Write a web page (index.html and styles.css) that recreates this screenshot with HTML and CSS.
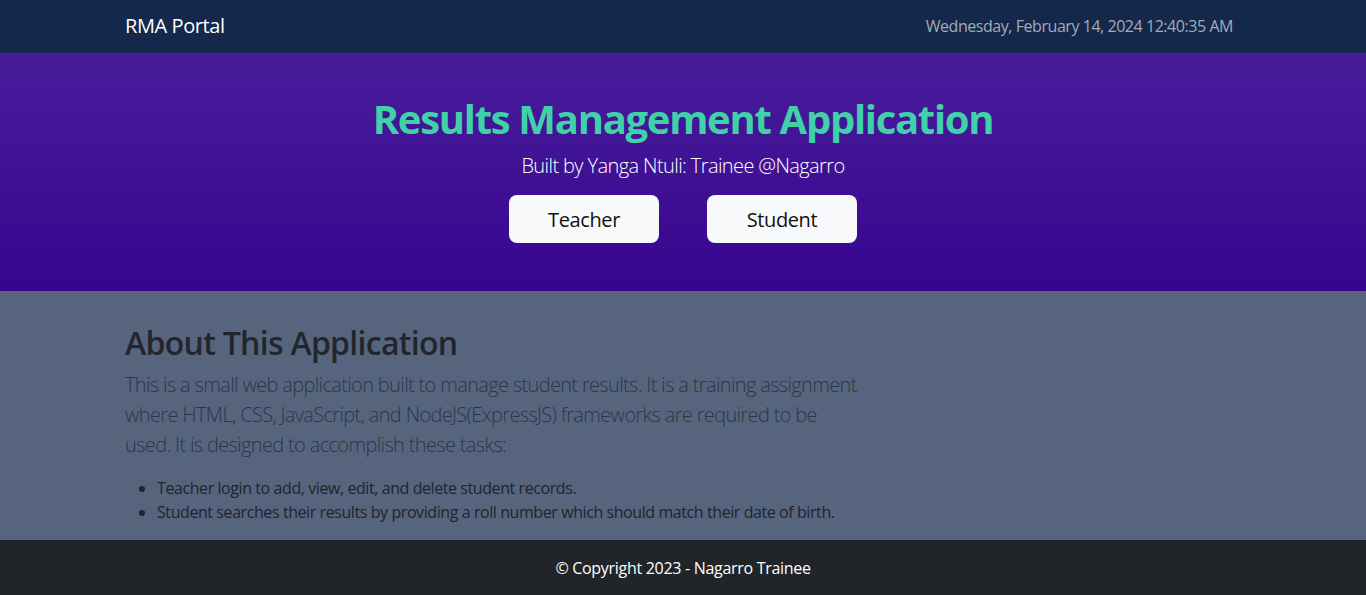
FILE: index.html
```html
<!DOCTYPE html>
<html lang="en">
<head>
<meta charset="utf-8">
<title>RMA Portal</title>
<link rel="stylesheet" href="styles.css">
</head>
<body>
<nav class="navbar">
  <div class="container nav-inner">
    <a class="brand" href="#">RMA Portal</a>
    <span class="clock">Wednesday, February 14, 2024 12:40:35 AM</span>
  </div>
</nav>
<header class="hero">
  <h1 class="hero-title">Results Management Application</h1>
  <p class="hero-sub">Built by Yanga Ntuli: Trainee @Nagarro</p>
  <div class="hero-actions">
    <a class="btn" href="#">Teacher</a>
    <a class="btn" href="#">Student</a>
  </div>
</header>
<main class="about">
  <div class="container">
    <h2 class="about-title">About This Application</h2>
    <p class="lead">This is a small web application built to manage student results. It is a training assignment where HTML, CSS, JavaScript, and NodeJS(ExpressJS) frameworks are required to be used. It is designed to accomplish these tasks:</p>
    <ul class="tasks">
      <li>Teacher login to add, view, edit, and delete student records.</li>
      <li>Student searches their results by providing a roll number which should match their date of birth.</li>
    </ul>
  </div>
</main>
<footer class="footer">© Copyright 2023 - Nagarro Trainee</footer>
</body>
</html>
```
FILE: styles.css
```css
* { box-sizing: border-box; }
html, body { margin: 0; padding: 0; }
body {
  font-family: "Open Sans", "Noto Sans", sans-serif;
  font-size: 16px;
  line-height: 1.5;
  color: #212529;
  background: #56657d;
}
.container {
  width: 1140px;
  margin: 0 auto;
  padding: 0 12px;
}
.navbar {
  background: #13284b;
  height: 53px;
}
.nav-inner {
  height: 53px;
  display: flex;
  align-items: center;
  justify-content: space-between;
  padding-bottom: 1px;
}
.brand {
  color: #fff;
  text-decoration: none;
  font-size: 20px;
  letter-spacing: -0.4px;
}
.clock {
  color: #a3abb8;
  font-size: 16px;
  padding-right: 8px;
  letter-spacing: -0.45px;
}
.hero {
  background: linear-gradient(180deg, #481d9b 0%, #37058f 100%);
  padding: 42px 0 48px;
  text-align: center;
}
.hero-title {
  margin: 0 0 8px;
  font-size: 40px;
  line-height: 48px;
  font-weight: 700;
  color: #40d1a9;
  letter-spacing: -1.3px;
}
.hero-sub {
  margin: 0 0 14px;
  font-size: 20px;
  line-height: 30px;
  font-weight: 300;
  color: #fff;
  letter-spacing: -0.6px;
}
.hero-actions {
  display: flex;
  justify-content: center;
  gap: 48px;
}
.btn {
  width: 150px;
  height: 48px;
  display: flex;
  align-items: center;
  justify-content: center;
  padding-top: 2px;
  background: #f8f9fa;
  color: #111;
  border-radius: 8px;
  font-size: 20px;
  text-decoration: none;
  letter-spacing: -0.4px;
}
.about {
  padding: 33px 0 1px;
}
.about-title {
  margin: 0 0 8px;
  font-size: 32px;
  line-height: 38px;
  font-weight: 600;
  color: #22262c;
  letter-spacing: -0.7px;
}
.lead {
  margin: 0 0 16px;
  width: 736px;
  font-size: 20px;
  line-height: 30px;
  font-weight: 300;
  color: #2c3646;
  letter-spacing: -0.66px;
}
.tasks {
  margin: 0 0 15px;
  padding-left: 32px;
  font-size: 16px;
  line-height: 24px;
  color: #1f242b;
  letter-spacing: -0.42px;
}
.footer {
  background: #212529;
  height: 55px;
  display: flex;
  align-items: center;
  justify-content: center;
  color: #fff;
  font-size: 16px;
  letter-spacing: -0.3px;
}
```
